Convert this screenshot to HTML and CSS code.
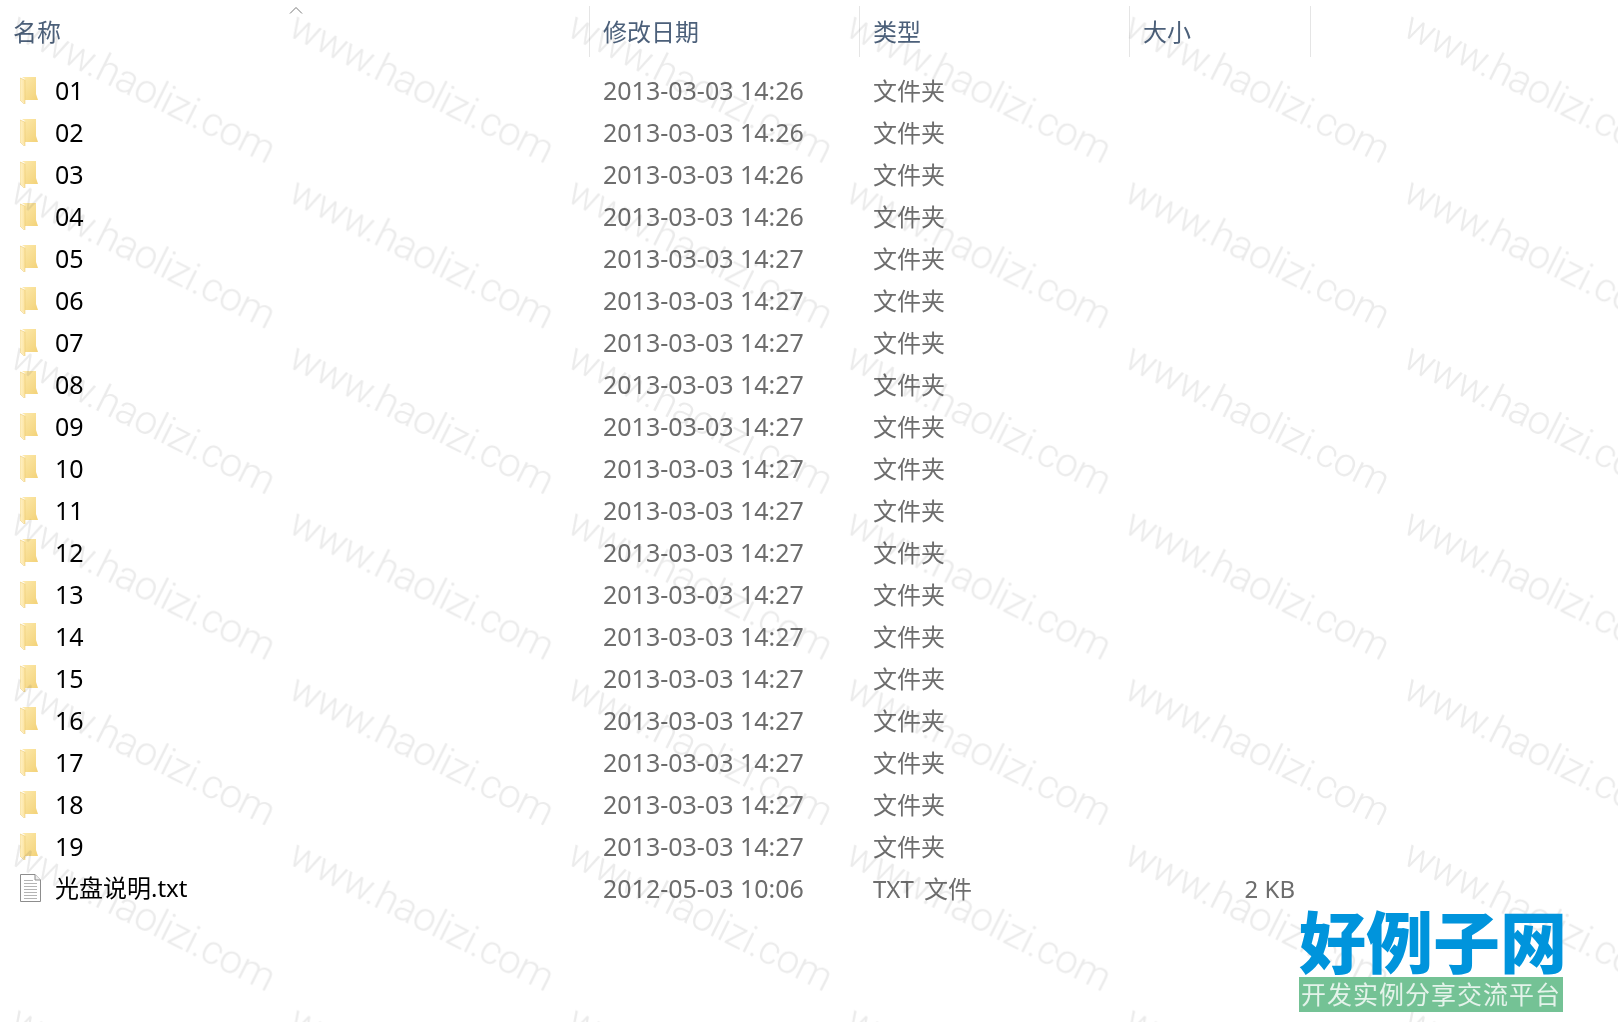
FILE: index.html
```html
<!DOCTYPE html>
<html lang="zh-CN">
<head>
    <meta charset="UTF-8">
    <title>光盘文件列表</title>
    <link rel="stylesheet" href="styles.css">
</head>
<body>
    <!-- Shared icons -->
    <svg class="icon-defs" width="0" height="0">
        <defs>
            <linearGradient id="folderBack" x1="0" y1="0" x2="1" y2="1">
                <stop offset="0" stop-color="#fdeaae"/>
                <stop offset="1" stop-color="#f3d278"/>
            </linearGradient>
            <linearGradient id="folderFlap" x1="0" y1="0" x2="1" y2="0">
                <stop offset="0" stop-color="#fff2c6"/>
                <stop offset="1" stop-color="#fce3a0"/>
            </linearGradient>
        </defs>
        <symbol id="folder" viewBox="0 0 18 27">
            <path d="M2 0H16V17L18 23H5V2Z" fill="url(#folderBack)"/>
            <path d="M0 1L5 3V27L0 23Z" fill="url(#folderFlap)"/>
            <path d="M0 1L5 3V27L4 27L0 23Z" fill="none" stroke="#e8c468" stroke-width=".5"/>
        </symbol>
        <symbol id="textfile" viewBox="0 0 21 28">
            <path d="M.5.5H15L20.5 6V27.5H.5Z" fill="#fff" stroke="#8d8d8d"/>
            <path d="M15 .5V6H20.5" fill="#eee" stroke="#8d8d8d"/>
            <path d="M4 6.5H13M4 9.5H17M4 12.5H17M4 15.5H17M4 18.5H17M4 21.5H17M4 24.5H17" stroke="#b4b4b4"/>
        </symbol>
    </svg>

    <!-- Header -->
    <div class="list-header">
        <div class="head-cell head-name">名称<span class="sort-arrow"><svg width="14" height="8" viewBox="0 0 14 8"><path d="M1 7.5L7 1.5L13 7.5" fill="none" stroke="#7a7a7a"/></svg></span></div>
        <div class="head-cell">修改日期</div>
        <div class="head-cell">类型</div>
        <div class="head-cell">大小</div>
    </div>

    <!-- File rows -->
    <div class="file-list">
        <div class="file-row"><div class="col-name"><svg class="folder-icon"><use href="#folder"/></svg>01</div><div class="col-date">2013-03-03 14:26</div><div class="col-type">文件夹</div></div>
        <div class="file-row"><div class="col-name"><svg class="folder-icon"><use href="#folder"/></svg>02</div><div class="col-date">2013-03-03 14:26</div><div class="col-type">文件夹</div></div>
        <div class="file-row"><div class="col-name"><svg class="folder-icon"><use href="#folder"/></svg>03</div><div class="col-date">2013-03-03 14:26</div><div class="col-type">文件夹</div></div>
        <div class="file-row"><div class="col-name"><svg class="folder-icon"><use href="#folder"/></svg>04</div><div class="col-date">2013-03-03 14:26</div><div class="col-type">文件夹</div></div>
        <div class="file-row"><div class="col-name"><svg class="folder-icon"><use href="#folder"/></svg>05</div><div class="col-date">2013-03-03 14:27</div><div class="col-type">文件夹</div></div>
        <div class="file-row"><div class="col-name"><svg class="folder-icon"><use href="#folder"/></svg>06</div><div class="col-date">2013-03-03 14:27</div><div class="col-type">文件夹</div></div>
        <div class="file-row"><div class="col-name"><svg class="folder-icon"><use href="#folder"/></svg>07</div><div class="col-date">2013-03-03 14:27</div><div class="col-type">文件夹</div></div>
        <div class="file-row"><div class="col-name"><svg class="folder-icon"><use href="#folder"/></svg>08</div><div class="col-date">2013-03-03 14:27</div><div class="col-type">文件夹</div></div>
        <div class="file-row"><div class="col-name"><svg class="folder-icon"><use href="#folder"/></svg>09</div><div class="col-date">2013-03-03 14:27</div><div class="col-type">文件夹</div></div>
        <div class="file-row"><div class="col-name"><svg class="folder-icon"><use href="#folder"/></svg>10</div><div class="col-date">2013-03-03 14:27</div><div class="col-type">文件夹</div></div>
        <div class="file-row"><div class="col-name"><svg class="folder-icon"><use href="#folder"/></svg>11</div><div class="col-date">2013-03-03 14:27</div><div class="col-type">文件夹</div></div>
        <div class="file-row"><div class="col-name"><svg class="folder-icon"><use href="#folder"/></svg>12</div><div class="col-date">2013-03-03 14:27</div><div class="col-type">文件夹</div></div>
        <div class="file-row"><div class="col-name"><svg class="folder-icon"><use href="#folder"/></svg>13</div><div class="col-date">2013-03-03 14:27</div><div class="col-type">文件夹</div></div>
        <div class="file-row"><div class="col-name"><svg class="folder-icon"><use href="#folder"/></svg>14</div><div class="col-date">2013-03-03 14:27</div><div class="col-type">文件夹</div></div>
        <div class="file-row"><div class="col-name"><svg class="folder-icon"><use href="#folder"/></svg>15</div><div class="col-date">2013-03-03 14:27</div><div class="col-type">文件夹</div></div>
        <div class="file-row"><div class="col-name"><svg class="folder-icon"><use href="#folder"/></svg>16</div><div class="col-date">2013-03-03 14:27</div><div class="col-type">文件夹</div></div>
        <div class="file-row"><div class="col-name"><svg class="folder-icon"><use href="#folder"/></svg>17</div><div class="col-date">2013-03-03 14:27</div><div class="col-type">文件夹</div></div>
        <div class="file-row"><div class="col-name"><svg class="folder-icon"><use href="#folder"/></svg>18</div><div class="col-date">2013-03-03 14:27</div><div class="col-type">文件夹</div></div>
        <div class="file-row"><div class="col-name"><svg class="folder-icon"><use href="#folder"/></svg>19</div><div class="col-date">2013-03-03 14:27</div><div class="col-type">文件夹</div></div>
        <div class="file-row"><div class="col-name name-text"><svg class="text-icon"><use href="#textfile"/></svg>光盘说明.txt</div><div class="col-date">2012-05-03 10:06</div><div class="col-type type-text">TXT 文件</div><div class="col-size">2 KB</div></div>
    </div>

    <!-- Watermark lies over the whole list -->
    <svg class="watermark" width="1618" height="1022">
        <defs>
            <pattern id="markTile" width="278.6" height="165.6" patternUnits="userSpaceOnUse">
                <text class="mark-text" x="8" y="35" transform="rotate(26.5 8 35)">www.haolizi.com</text>
            </pattern>
        </defs>
        <rect width="1618" height="1022" fill="url(#markTile)"/>
    </svg>

    <!-- Site logo, bottom right -->
    <div class="site-logo">
        <div class="logo-title">好例子网</div>
        <div class="logo-sub">开发实例分享交流平台</div>
    </div>
</body>
</html>
```

FILE: styles.css
```css
body {
    margin: 0;
    width: 1618px;
    height: 1022px;
    overflow: hidden;
    position: relative;
    background-color: white;
    color: #6d6d6d;
    font-family: "Noto Sans", "Noto Sans CJK SC", sans-serif;
    font-size: 25px;
}

.icon-defs {
    position: absolute;
}

/* Header */
.list-header {
    display: grid;
    grid-template-columns: 590px 270px 270px 181px;
    height: 51px;
    margin-top: 6px;
    margin-bottom: 12px;
}

.head-cell {
    display: flex;
    align-items: center;
    padding-left: 13px;
    padding-bottom: 2px;
    font-size: 24px;
    color: #4c607a;
    border-right: 1px solid #e5e5e5;
}

.head-name {
    position: relative;
}

.sort-arrow {
    position: absolute;
    left: 289px;
    top: -1px;
    line-height: 0;
}

/* File rows */
.file-row {
    display: grid;
    grid-template-columns: 590px 270px 270px 181px;
    height: 42px;
    align-items: center;
}

.col-name {
    display: flex;
    align-items: center;
    padding-left: 20px;
    color: black;
}

.name-text {
    font-size: 24px;
    line-height: 30px;
}

.folder-icon {
    width: 18px;
    height: 27px;
    margin-right: 17px;
}

.text-icon {
    width: 21px;
    height: 28px;
    margin-right: 14px;
}

.col-date {
    padding-left: 13px;
}

.col-type {
    padding-left: 13px;
    padding-bottom: 1px;
    font-size: 24px;
}

.type-text {
    word-spacing: 4px;
}

.col-size {
    text-align: right;
    padding-right: 16px;
    font-size: 24px;
}

/* Watermark */
.watermark {
    position: absolute;
    top: 0;
    left: 0;
    pointer-events: none;
    mix-blend-mode: multiply;
}

.mark-text {
    font-family: Roboto, sans-serif;
    font-size: 40px;
    font-weight: 300;
    letter-spacing: -.6px;
    fill: #ebebeb;
}

/* Logo */
.site-logo {
    position: absolute;
    left: 1299px;
    top: 901px;
    width: 264px;
}

.logo-title {
    height: 76px;
    line-height: 76px;
    font-family: "Noto Sans CJK SC", sans-serif;
    font-size: 67px;
    font-weight: 900;
    color: #0094dc;
    white-space: nowrap;
}

.logo-sub {
    height: 35px;
    line-height: 33px;
    text-align: center;
    font-family: "Noto Sans CJK SC", sans-serif;
    font-size: 25px;
    letter-spacing: 1px;
    color: #e4f3ea;
    background-color: #74c295;
    white-space: nowrap;
}
```
